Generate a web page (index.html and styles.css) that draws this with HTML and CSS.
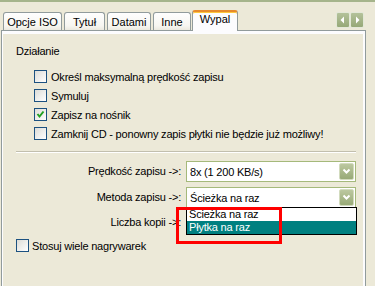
FILE: index.html
```html
<!DOCTYPE html>
<html lang="pl">
<head>
    <meta charset="UTF-8">
    <meta name="viewport" content="width=device-width, initial-scale=1.0">
    <title>Wypal</title>
    <link rel="stylesheet" href="styles.css">
</head>
<body>
    <div class="topline"></div>

    <div class="tabstrip">
        <div class="tab tab-iso">Opcje ISO</div>
        <div class="tab tab-title">Tytuł</div>
        <div class="tab tab-data">Datami</div>
        <div class="tab tab-other">Inne</div>
        <div class="tab tab-burn active">Wypal</div>
        <div class="scroller">
            <span class="scroll-btn">
                <svg width="12" height="14" viewBox="0 0 12 14"><path d="M7 3.5 L3.5 7 L7 10.5 Z" fill="#fff"/></svg>
            </span>
            <span class="scroll-btn">
                <svg width="12" height="14" viewBox="0 0 12 14"><path d="M5 3.5 L8.5 7 L5 10.5 Z" fill="#fff"/></svg>
            </span>
        </div>
    </div>

    <div class="panel">
        <div class="page">
            <div class="group-title">Działanie</div>

            <div class="checks">
                <label class="check"><span class="box"></span>Określ maksymalną prędkość zapisu</label>
                <label class="check"><span class="box"></span>Symuluj</label>
                <label class="check">
                    <span class="box">
                        <svg width="11" height="11" viewBox="0 0 11 11"><path d="M2.5 5 L4.5 7.5 L8.5 2.5" fill="none" stroke="#21a121" stroke-width="2"/></svg>
                    </span>Zapisz na nośnik
                </label>
                <label class="check"><span class="box"></span>Zamknij CD - ponowny zapis płytki nie będzie już możliwy!</label>
            </div>

            <hr class="sep">

            <div class="fields">
                <span class="field-label">Prędkość zapisu -&gt;:</span>
                <div class="combo">
                    <span class="combo-text">8x (1 200 KB/s)</span>
                    <span class="combo-btn">
                        <svg width="13" height="15" viewBox="0 0 13 15"><path d="M3.5 5.5 L6.5 8.5 L9.5 5.5" fill="none" stroke="#fff" stroke-width="2"/></svg>
                    </span>
                </div>

                <span class="field-label">Metoda zapisu -&gt;:</span>
                <div class="combo">
                    <span class="combo-text">Ścieżka na raz</span>
                    <span class="combo-btn">
                        <svg width="13" height="15" viewBox="0 0 13 15"><path d="M3.5 5.5 L6.5 8.5 L9.5 5.5" fill="none" stroke="#fff" stroke-width="2"/></svg>
                    </span>
                    <ul class="dropdown">
                        <li>Ścieżka na raz</li>
                        <li class="selected">Płytka na raz</li>
                    </ul>
                </div>

                <span class="field-label short">Liczba kopii -&gt;:</span>
                <div class="spin"></div>
            </div>

            <label class="check multi"><span class="box"></span>Stosuj wiele nagrywarek</label>
        </div>
    </div>

    <div class="highlight"></div>
</body>
</html>
```

FILE: styles.css
```css
body {
    margin: 0;
    height: 286px;
    overflow: hidden;
    background-color: #ece9d8;
    font-family: "Liberation Sans", Arial, sans-serif;
    font-size: 11px;
    letter-spacing: -0.2px;
    color: #000;
    position: relative;
}

.topline {
    height: 2px;
    background-color: #a5b48b;
}

/* tabs */
.tabstrip {
    display: flex;
    align-items: flex-end;
    height: 28px;
    padding-left: 3px;
}

.tab {
    flex: none;
    height: 18px;
    box-sizing: border-box;
    padding: 2px 0 0;
    line-height: 15px;
    text-align: center;
    letter-spacing: 0;
    border: 1px solid #919b9c;
    border-bottom: none;
    border-radius: 3px 3px 0 0;
    background: linear-gradient(#fefefe, #f7f6f1 75%, #ebe9df);
    margin-right: 2px;
    white-space: nowrap;
}

.tab-iso { width: 59px; }
.tab-title { width: 41px; }
.tab-data { width: 44px; }
.tab-other { width: 38px; }
.tab-burn { width: 46px; }

.tab.active {
    position: relative;
    z-index: 1;
    height: 21px;
    padding-top: 0;
    margin: 0 0 -1px -1px;
    border-top: 2px solid #e68b2c;
    box-shadow: inset 0 1px 0 #ffc73c;
    background: #fcfcfe;
}

.scroller {
    display: flex;
    align-self: flex-start;
    margin: 10px 11px 0 auto;
}

.scroll-btn {
    width: 14px;
    height: 16px;
    box-sizing: border-box;
    border: 1px solid #e3e8d8;
    border-radius: 2px;
    background: linear-gradient(#b4c29a, #96a877);
    display: flex;
    align-items: center;
    justify-content: center;
}

/* panel */
.panel {
    margin-left: 1px;
    width: 365px;
    height: 256px;
    box-sizing: border-box;
    border: 1px solid #919b9c;
    border-bottom: none;
    background-color: #fcfcfe;
    padding: 3px 2px 0 1px;
}

.page {
    height: 252px;
    box-sizing: border-box;
    background-color: #ece9d8;
    padding: 11px 7px 0 13px;
}

.group-title {
    line-height: 13px;
}

.checks {
    margin-top: 9px;
    padding-left: 18px;
}

.check {
    display: flex;
    align-items: center;
    height: 19px;
    white-space: nowrap;
}

.box {
    width: 13px;
    height: 13px;
    box-sizing: border-box;
    border: 1px solid #1c5180;
    background: linear-gradient(135deg, #dcdcd7, #fff);
    margin-right: 4px;
    flex-shrink: 0;
    display: flex;
}

.sep {
    height: 0;
    border: 0;
    border-top: 1px solid #c2bfae;
    border-bottom: 1px solid #fff;
    margin: 8px 0 8px;
}

/* fields */
.fields {
    display: grid;
    grid-template-columns: 1fr 170px;
    column-gap: 5px;
    row-gap: 5px;
}

.field-label {
    text-align: right;
    line-height: 21px;
    white-space: nowrap;
}

.field-label.short {
    line-height: 18px;
}

.spin {
    height: 18px;
}

.combo {
    position: relative;
    height: 21px;
    box-sizing: border-box;
    border: 1px solid #a5b97b;
    background-color: #fff;
    display: flex;
    align-items: center;
}

.combo-text {
    flex: 1;
    padding-left: 3px;
    white-space: nowrap;
}

.combo-btn {
    width: 15px;
    height: 17px;
    margin: 1px;
    box-sizing: border-box;
    border: 1px solid #d2dbbe;
    border-radius: 2px;
    background: linear-gradient(#bcc8a0, #98aa77);
    display: flex;
    align-items: center;
    justify-content: center;
}

.dropdown {
    position: absolute;
    z-index: 2;
    left: -1px;
    top: 19px;
    width: 171px;
    box-sizing: border-box;
    margin: 0;
    padding: 0;
    list-style: none;
    border: 1px solid #000;
    background-color: #fff;
}

.dropdown li {
    line-height: 13px;
    padding-left: 2px;
}

.dropdown li.selected {
    background-color: #008080;
    color: #fff;
}

.check.multi {
    margin-top: 5px;
}

.check.multi .box {
    margin-right: 3px;
}

/* red frame drawn over the screenshot */
.highlight {
    position: absolute;
    z-index: 3;
    left: 176px;
    top: 207px;
    width: 106px;
    height: 37px;
    box-sizing: border-box;
    border: 3px solid #f00;
}
```
